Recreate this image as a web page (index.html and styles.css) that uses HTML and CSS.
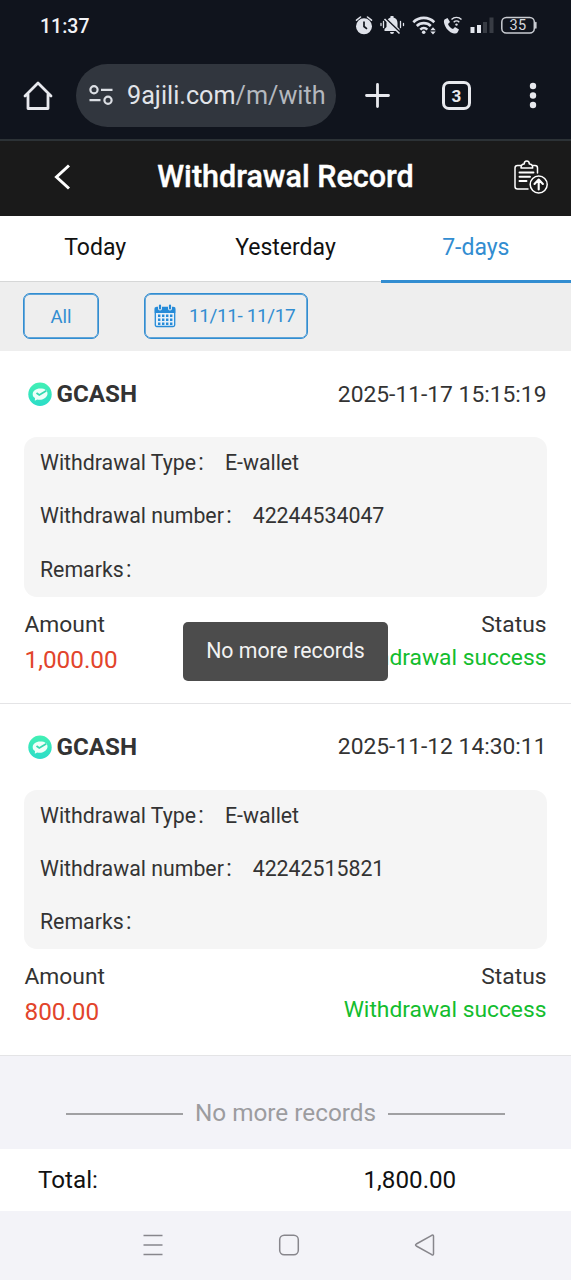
FILE: index.html
```html
<!DOCTYPE html>
<html lang="en">
<head>
<meta charset="utf-8">
<title>Withdrawal Record</title>
<link rel="stylesheet" href="styles.css">
</head>
<body>
<div class="screen">
  <div class="status-bar">
    <span class="clock">11:37</span>
    <svg class="status-icons" width="190" height="30" viewBox="350 10 190 30">
      <g fill="#dfe2ea">
        <circle cx="364" cy="26.300" r="8"/>
        <path d="M356.500 20.200l4-3.200M371.500 20.200l-4-3.200" stroke="#dfe2ea" stroke-width="1.600" stroke-linecap="round"/>
        <path d="M364 21.500v5l3 2.300" fill="none" stroke="#10141d" stroke-width="1.700"/>
        <path d="M384.500 31v-2l2-2v-4c0-3 2-5 4-5.500v-1.500h3v1.500c2.500.5 4 2.500 4 5.500v4l2 2v2zM390 32h4a2 2 0 0 1-4 0z"/>
        <path d="M381 23.500v2M383.500 21.500v6M400.500 21.500v6M403.500 23.500v2" stroke="#dfe2ea" stroke-width="1.300" stroke-linecap="round"/>
      </g>
      <path d="M385.500 18.500l15 14.500" stroke="#10141d" stroke-width="2"/>
      <path d="M384.500 19l15 14.500" stroke="#dfe2ea" stroke-width="1.600"/>
      <g fill="none" stroke="#dfe2ea" stroke-width="2.600">
        <path d="M413.300 22.200a15 15 0 0 1 21 0"/>
        <path d="M416.800 26a10 10 0 0 1 14 0"/>
        <path d="M420.300 29.600a5 5 0 0 1 7 0"/>
      </g>
      <circle cx="423.700" cy="32.200" r="1.800" fill="#dfe2ea"/>
      <path d="M430.300 30.300h5.400l-2.700-3zM430.300 31.500h5.400l-2.700 3z" fill="#dfe2ea"/>
      <path d="M444.500 19.500l3-1.500 2.500 4-2 2c1 2.500 2.500 4 5 5l2-2 4 2.500-1.500 3c-.7 1-2 1.300-3.500.9-5-1.200-8.500-5-9.900-10.500-.3-1.400-.2-2.700.4-3.400z" fill="#dfe2ea"/>
      <g fill="none" stroke="#dfe2ea" stroke-width="1.400">
        <path d="M451.500 19.500a7 7 0 0 1 10 0"/>
        <path d="M453.700 22.200a4 4 0 0 1 5.600 0"/>
      </g>
      <circle cx="456.500" cy="24.600" r="1.200" fill="#dfe2ea"/>
      <path d="M470.500 27h4v6h-4zM477 25h4v8h-4z" fill="#e4e7ee"/>
      <path d="M483 22h4v11h-4zM489.500 17.500h4v15.500h-4z" fill="#383c44"/>
      <rect x="501.800" y="17.500" width="32.500" height="15.500" rx="4.500" fill="none" stroke="#c9ccd2" stroke-width="1.500"/>
      <path d="M535.800 22.500v5.500" stroke="#c9ccd2" stroke-width="1.600" stroke-linecap="round"/>
      <text class="battery" x="518" y="30.300">35</text>
    </svg>
  </div>

  <div class="browser-bar">
    <svg class="home" width="30" height="32" viewBox="0 0 30 32" fill="none" stroke="#e8e9ee" stroke-width="2.800" stroke-linejoin="round" stroke-linecap="round">
      <path d="M2 16L15 3 28 16M5 14.500v14h20v-14"/>
    </svg>
    <div class="address">
      <svg width="26" height="22" viewBox="0 0 26 22" fill="none" stroke="#dcdfe4" stroke-width="2.200">
        <circle cx="6" cy="4.800" r="3.600"/><path d="M13 4.800h11.500M1.500 15.200h11"/><circle cx="20" cy="15.200" r="3.600"/>
      </svg>
      <span class="url">9ajili.com<span class="path">/m/with</span></span>
    </div>
    <svg class="plus" width="28" height="28" viewBox="0 0 28 28" stroke="#e8e9ee" stroke-width="2.800" stroke-linecap="round">
      <path d="M14.500 2.500v22M3.500 13.500h22"/>
    </svg>
    <div class="tab-count">3</div>
    <svg class="dots" width="10" height="28" viewBox="0 0 10 28" fill="#e8e9ee">
      <circle cx="5" cy="4" r="3.200"/><circle cx="5" cy="13.500" r="3.200"/><circle cx="5" cy="23" r="3.200"/>
    </svg>
  </div>

  <div class="page-head">
    <svg class="back" width="18" height="28" viewBox="0 0 18 28" fill="none" stroke="#fff" stroke-width="3">
      <path d="M16 2.500L3.500 14 16 25.500"/>
    </svg>
    <h1 class="title">Withdrawal Record</h1>
    <svg class="clipboard" width="36" height="36" viewBox="0 0 36 36" fill="none" stroke="#fff" stroke-width="1.500" stroke-linecap="round" stroke-linejoin="round">
      <path d="M8 6.500H4.500A2.500 2.500 0 0 0 2 9v18.500A2.500 2.500 0 0 0 4.500 30h10.500M19.500 6.500H22A2.500 2.500 0 0 1 24.500 9v5"/>
      <path d="M8 9c0-2.500 1-4 3.200-4 0-4 5.100-4 5.100 0C18.500 5 19.700 6.500 19.700 9z"/>
      <path d="M6.500 13.500h14M6.500 17.700h10.500M6.500 22h7" stroke-width="1.900"/>
      <circle cx="25.700" cy="25.500" r="8.500"/>
      <path d="M25.700 30.500v-9.500M21.500 25l4.200-4.500 4.200 4.500" stroke-width="2.100"/>
    </svg>
  </div>

  <div class="tabs">
    <div class="tab">Today</div>
    <div class="tab">Yesterday</div>
    <div class="tab active">7-days</div>
  </div>

  <div class="filters">
    <div class="chip all">All</div>
    <div class="chip range">
      <svg width="22" height="24" viewBox="0 0 22 24">
        <rect x="1.300" y="3.500" width="19.400" height="19" rx="1.500" fill="#e7f0f8" stroke="#268bd8" stroke-width="1.300"/>
        <path d="M.7 3.500h20.600v5.500H.7z" fill="#268bd8"/>
        <path d="M6 1.500v3M16 1.500v3" stroke="#efefef" stroke-width="4" stroke-linecap="round"/>
        <path d="M6 1.500v3M16 1.500v3" stroke="#268bd8" stroke-width="2.200" stroke-linecap="round"/>
        <path d="M4 11.700h15M4 15.700h15M4 19.700h15" stroke="#268bd8" stroke-width="2.400" stroke-dasharray="2.400 1.600"/>
      </svg>
      <span>11/11- 11/17</span>
    </div>
  </div>

  <div class="record">
    <div class="record-head">
      <svg class="wallet" width="24" height="24" viewBox="0 0 24 24">
        <defs><linearGradient id="mint" x1="0" y1="0" x2="0" y2="1"><stop offset="0" stop-color="#42f0b4"/><stop offset="1" stop-color="#2bdcc8"/></linearGradient></defs>
        <circle cx="12" cy="12.300" r="11.700" fill="url(#mint)"/>
        <path d="M12.300 6.500c4.700 0 7.200 2 7.200 5s-3 6.300-8 6.300c-1 0-1.600 0-2.300-.2l-2.400 1.200.2-2.700c-1.600-1-2.300-2.200-2.300-3.800 0-3.300 3-5.800 7.600-5.800z" fill="#eefff9"/>
        <path d="M8.500 11l2.800 2 7-4.200" fill="none" stroke="#35d9b0" stroke-width="1.800"/>
      </svg>
      <span class="bank">GCASH</span>
      <span class="date">2025-11-17 15:15:19</span>
    </div>
    <div class="details">
      <div class="row"><span class="label">Withdrawal Type</span><span class="colon">：</span><span class="type">E-wallet</span></div>
      <div class="row"><span class="label">Withdrawal number</span><span class="colon">：</span><span class="number">42244534047</span></div>
      <div class="row"><span class="label">Remarks</span><span class="colon">：</span></div>
    </div>
    <div class="summary"><span>Amount</span><span>Status</span></div>
    <div class="result"><span class="amount">1,000.00</span><span class="success">Withdrawal success</span></div>
  </div>

  <div class="record">
    <div class="record-head">
      <svg class="wallet" width="24" height="24" viewBox="0 0 24 24">
        <circle cx="12" cy="12.300" r="11.700" fill="url(#mint)"/>
        <path d="M12.300 6.500c4.700 0 7.200 2 7.200 5s-3 6.300-8 6.300c-1 0-1.600 0-2.300-.2l-2.400 1.200.2-2.700c-1.600-1-2.300-2.200-2.300-3.800 0-3.300 3-5.800 7.600-5.800z" fill="#eefff9"/>
        <path d="M8.500 11l2.800 2 7-4.200" fill="none" stroke="#35d9b0" stroke-width="1.800"/>
      </svg>
      <span class="bank">GCASH</span>
      <span class="date">2025-11-12 14:30:11</span>
    </div>
    <div class="details">
      <div class="row"><span class="label">Withdrawal Type</span><span class="colon">：</span><span class="type">E-wallet</span></div>
      <div class="row"><span class="label">Withdrawal number</span><span class="colon">：</span><span class="number">42242515821</span></div>
      <div class="row"><span class="label">Remarks</span><span class="colon">：</span></div>
    </div>
    <div class="summary"><span>Amount</span><span>Status</span></div>
    <div class="result"><span class="amount">800.00</span><span class="success">Withdrawal success</span></div>
  </div>

  <div class="list-end"><span>No more records</span></div>
  <div class="total"><span class="total-label">Total:</span><span class="total-value">1,800.00</span></div>

  <div class="nav-bar">
    <svg width="22" height="22" viewBox="0 0 22 22" fill="none" stroke="#87868c" stroke-width="1.500"><path d="M1.500 1.500h19M1.500 11h19M1.500 20.500h19"/></svg>
    <svg width="22" height="22" viewBox="0 0 22 22" fill="none" stroke="#87868c" stroke-width="1.500"><rect x="1.700" y="1.200" width="18.600" height="19.600" rx="4.500"/></svg>
    <svg width="22" height="22" viewBox="0 0 22 22" fill="none" stroke="#87868c" stroke-width="1.500" stroke-linejoin="round"><path d="M2.300 10L17.800 1.300q1.700-.7 1.700 1v17.400q0 1.700-1.700 1L2.300 12q-1.500-1 0-2z"/></svg>
  </div>

  <div class="toast">No more records</div>
</div>
</body>
</html>
```
FILE: styles.css
```css
* { box-sizing: border-box; }

body {
  margin: 0;
  font-family: Roboto, "Noto Sans CJK SC", sans-serif;
  color: #333;
}

svg { display: block; flex: none; }

.screen {
  position: relative;
  display: flex;
  flex-direction: column;
  width: 571px;
  height: 1280px;
  overflow: hidden;
  background: #fff;
}

.status-bar {
  display: flex;
  justify-content: space-between;
  height: 52px;
  padding: 10px 31px 0 40px;
  background: #10141d;
}

.clock {
  font-size: 19.500px;
  font-weight: 500;
  line-height: 34px;
  color: #f2f3f7;
}

.battery {
  font: 400 14.500px Roboto, sans-serif;
  letter-spacing: 0.3px;
  text-anchor: middle;
  fill: #d5d8de;
}

.browser-bar {
  display: flex;
  align-items: center;
  height: 89px;
  padding: 0 33px 0 23px;
  background: #10141d;
  border-bottom: 2px solid #2c3236;
}

.address {
  display: flex;
  align-items: center;
  gap: 12px;
  width: 260px;
  height: 63px;
  margin-left: 23px;
  padding-left: 12px;
  border-radius: 32px;
  background: #31363e;
}

.url {
  width: 198px;
  margin-left: 1px;
  overflow: hidden;
  white-space: nowrap;
  font-size: 25.200px;
  line-height: 35px;
  color: #e1e4e9;
}

.path { color: #b4b8be; }

.plus { margin-left: 27px; }

.tab-count {
  width: 29px;
  height: 29px;
  margin-left: 51px;
  border: 3px solid #e8e9ee;
  border-radius: 7px;
  font-size: 17px;
  font-weight: 700;
  line-height: 24px;
  text-align: center;
  color: #e8e9ee;
}

.dots { margin-left: auto; }

.page-head {
  display: flex;
  align-items: center;
  justify-content: space-between;
  height: 75px;
  padding: 0 22px 3px 53px;
  background: #1a1a1a;
}

.title {
  margin: 0 0 0 -13px;
  font-size: 30.500px;
  font-weight: 500;
  line-height: 40px;
  color: #fff;
  -webkit-text-stroke: 0.4px #fff;
}

.tabs {
  display: flex;
  height: 67px;
  background: #eee;
}

.tab {
  flex: 1;
  height: 66px;
  border-bottom: 1px solid #d6d7d7;
  font-size: 23px;
  line-height: 64px;
  text-align: center;
  color: #111;
  background: #fff;
}

.tab.active {
  height: 67px;
  border-bottom: 3px solid #328dd1;
  color: #328dd1;
}

.filters {
  display: flex;
  gap: 45px;
  height: 68px;
  padding: 10px 23px;
  background: #eee;
}

.chip {
  display: flex;
  align-items: center;
  justify-content: center;
  height: 46px;
  border: 1px solid #328dd1;
  box-shadow: inset 0 0 0 0.700px #328dd1;
  border-radius: 7px;
  font-size: 19px;
  color: #328dd1;
}

.all {
  width: 76px;
  padding-top: 1px;
  font-size: 18.500px;
}

.range {
  width: 164px;
  justify-content: flex-start;
  gap: 13px;
  padding-left: 9px;
  letter-spacing: -0.400px;
  line-height: 44px;
}

.record {
  height: 352.500px;
  padding: 0 24.500px 0 24px;
  border-bottom: 1px solid #e4e4e6;
}

.record-head {
  display: flex;
  align-items: center;
  height: 86px;
  padding-left: 4px;
}

.bank {
  margin-left: 4.500px;
  font-size: 24.200px;
  font-weight: 700;
}

.date {
  margin-left: auto;
  font-size: 22.800px;
}

.details {
  height: 159.500px;
  border-radius: 13px;
  padding-left: 16px;
  background: #f5f5f5;
}

.row {
  display: flex;
  align-items: baseline;
  height: 53.400px;
  font-size: 21.300px;
  line-height: 51.600px;
}

.colon {
  width: 28.800px;
  font-family: "Noto Sans CJK SC", sans-serif;
  font-size: 20px;
  font-weight: 300;
  line-height: 30px;
}

.summary,
.result {
  display: flex;
  justify-content: space-between;
  padding-left: 0.500px;
}

.summary {
  margin-top: 9.400px;
  font-size: 22.800px;
  line-height: 37px;
}

.result {
  font-size: 22.800px;
  line-height: 30px;
}

.amount {
  padding-top: 2px;
  font-size: 24.300px;
  color: #e2442b;
}

.success { color: #13bd2e; }

.list-end {
  display: flex;
  align-items: center;
  justify-content: center;
  gap: 12px;
  height: 93px;
  padding-top: 22px;
  background: #f3f3f8;
  font-size: 24.300px;
  line-height: 24px;
  color: #9c9c9f;
}

.list-end span { padding-bottom: 2px; }

.list-end::before,
.list-end::after {
  content: "";
  width: 117px;
  height: 2px;
  background: #a0a0a3;
}

.total {
  display: flex;
  height: 62px;
  padding-left: 38px;
  font-size: 24.200px;
  line-height: 62px;
  color: #111;
}

.total-label { width: 325.500px; }

.nav-bar {
  flex: 1;
  display: flex;
  align-items: center;
  justify-content: center;
  gap: 114px;
  padding: 0 0 1px 6px;
  background: #f3f3f8;
}

.toast {
  position: absolute;
  top: 622px;
  left: 183px;
  width: 205px;
  height: 59px;
  border-radius: 5px;
  background: #4c4c4c;
  font-size: 21.300px;
  line-height: 58px;
  text-align: center;
  color: #f2f2f2;
}
```
